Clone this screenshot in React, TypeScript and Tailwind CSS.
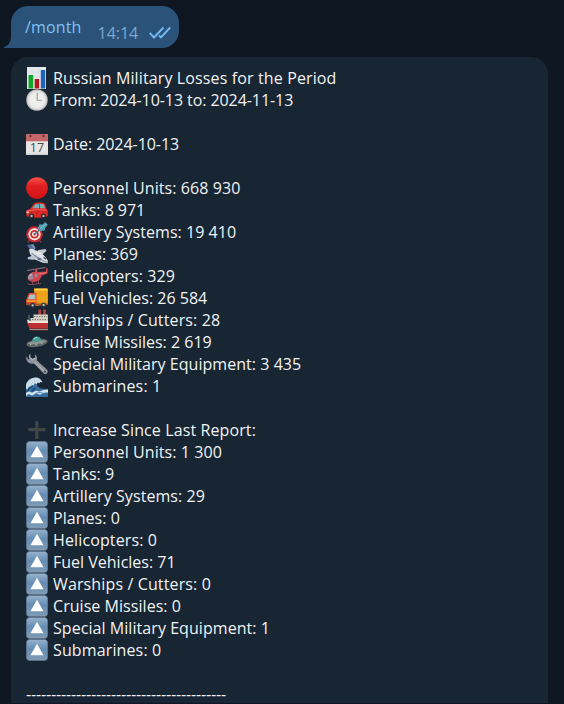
import type { ReactNode } from "react";

function Icon({ children }: { children?: ReactNode }) {
  return (
    <svg className="h-[22px] w-[22px] shrink-0" viewBox="0 0 22 22" fill="none">
      {children}
    </svg>
  );
}

const Chart = () => (
  <Icon>
    <path d="M1 0h19v22H1z" fill="#e4e9ec" />
    <path d="M1 5h19M1 10h19M1 15h19M6 0v22M13 0v22" stroke="#d3dade" strokeWidth=".5" />
    <path d="M2.5 8h4.7v13.5H2.5z" fill="#12a52a" />
    <path d="M8.7 12h4.4v9.5H8.7z" fill="#b8161c" />
    <path d="M14.8 3h4.4v18.5h-4.4z" fill="#1d64b8" />
  </Icon>
);

const Clock = () => (
  <Icon>
    <defs>
      <radialGradient id="face"><stop offset=".6" stopColor="#efefed" /><stop offset=".85" stopColor="#dcdcda" /><stop offset="1" stopColor="#a5a6a8" /></radialGradient>
    </defs>
    <circle cx="11" cy="11" r="10.8" fill="url(#face)" />
    <path d="M11.2 3.8v7.4h4.6" stroke="#98989a" strokeWidth="1.1" />
  </Icon>
);

const Calendar = () => (
  <Icon>
    <path d="M0 1h22v21H0z" fill="#e8e6e5" />
    <path d="M0 1h22v7.3H0z" fill="#c4666a" />
    <path d="M0 20.6h22V22H0z" fill="#d2d0d0" />
    <circle cx="4.5" cy="3" r="1.3" fill="#743b42" />
    <circle cx="17.5" cy="3" r="1.3" fill="#743b42" />
    <text x="11" y="19.4" textAnchor="middle" fontSize="12.500" fontWeight="500" fontFamily="Open Sans, sans-serif" fill="#4a4b50">17</text>
  </Icon>
);

const Red = () => (
  <Icon>
    <defs>
      <linearGradient id="red" x1="0" y1="0" x2="0" y2="1"><stop stopColor="#fa5148" /><stop offset=".4" stopColor="#e02020" /><stop offset="1" stopColor="#d31217" /></linearGradient>
    </defs>
    <circle cx="11" cy="11" r="10.8" fill="url(#red)" />
  </Icon>
);

const Car = () => (
  <Icon>
    <path d="M.4 11.500 4.500 9.500 8.300 4.200q5.500-2 10.300.3l2 5.500 1.200 2v5l-3 1.800L3.500 18.500.5 17z" fill="#dc2928" />
    <path d="m6.300 9.300 3-4 3.700-.6v4.500zM14 4.700l3.600.5 1.500 4-5.100.1z" fill="#74b0b4" />
    <path d="M1 12 8 10.700l12.500.2" stroke="#f7605a" />
    <path d="M11 11.500v5.500M12 12.500h2" stroke="#a91d22" strokeWidth=".7" />
    <circle cx="5.500" cy="17" r="2.600" fill="#27292f" /><circle cx="5.500" cy="17" r="1.200" fill="#aeb6b9" />
    <circle cx="17.500" cy="17" r="2.600" fill="#27292f" /><circle cx="17.500" cy="17" r="1.200" fill="#aeb6b9" />
    <path d="M.5 12.500h2.300v1.700H.5z" fill="#ffe3ac" />
  </Icon>
);

const Target = () => (
  <Icon>
    <path d="m4 18-2 3.500M13 19l2 2.500" stroke="#8c3a38" strokeWidth="1.500" />
    <ellipse cx="8.500" cy="13.300" rx="8.200" ry="8" fill="#cf2930" />
    <circle cx="8.500" cy="13.300" r="6.100" fill="#f2e7e5" />
    <circle cx="8.500" cy="13.300" r="4.300" fill="#cf2930" />
    <circle cx="8.500" cy="13.300" r="2.500" fill="#f4e5e3" />
    <circle cx="8.500" cy="13.300" r="1.100" fill="#ad2930" />
    <path d="m8.500 13.300 8.500-7.600" stroke="#3c7185" strokeWidth="1.300" />
    <path d="m12 6.800 1.500-3.500 3 .2 3-2.700.6 2.200 1.900.5-2.700 3.600-.6 2.400-4.500.5-1.300-1.200z" fill="#4c9fb1" />
    <path d="m14 7.600 7-5" stroke="#90d1da" strokeWidth=".8" />
  </Icon>
);

const Plane = () => (
  <Icon>
    <path d="m1 2 5.500-.8L9 4.500l-.5 3L5 8z" fill="#536a9a" />
    <path d="m5 1.500 2.500-.3L9.500 5l-1 2z" fill="#8190b5" />
    <path d="M11 8.500 12.500 7l7-1 1 1.800-4.500 4z" fill="#c3c9cd" />
    <path d="M3 6.500q3-1.500 5.500.5l6 2 5 5 2.500 4-.4 2.300-4.600-.6-8-3.200-5-5.500z" fill="#dee2e5" />
    <path d="m9.500 11.500-8 3 .5 1.800 5.500.5 7.500-1.300z" fill="#bdc7cf" />
    <path d="m5.500 10 5 4 8 4.500 3 .4" stroke="#8391a4" strokeWidth="1.200" />
    <path d="m17.500 14.200 2.500 2" stroke="#3d4c68" strokeWidth="1.400" />
    <path d="m12 14.800 3.500.6-1 2-3-.4z" fill="#56698a" />
  </Icon>
);

const Helicopter = () => (
  <Icon>
    <path d="M1 5.500 19.500 2.500" stroke="#a3717a" strokeWidth="1" />
    <path d="M10.300 4v4" stroke="#bf5660" strokeWidth="1.800" />
    <path d="M9 6.500 13 7l7-.5V3.500l1.600-.5v5.500l-5.600 2-2.500 4.500q-3 2.500-7.500 1.700-3.800-.8-4.500-3.200Q2 7.300 9 6.500z" fill="#cf434c" />
    <path d="M1.800 13Q2.200 9.200 6.500 8.500l.8 5.500-4 .8zM8.800 8.800l2.600.2v3l-2.600.6z" fill="#9a8f9e" />
    <path d="M3 11.200q1-1.800 3-2" stroke="#d7bec6" strokeWidth="1" />
    <path d="M1.500 18.500Q3 19.700 5 19.500l10-1M6.500 16.500v3M12.500 15.500v3.300" stroke="#8a4a55" strokeWidth="1" />
    <path d="m13 8.800 7-1.200" stroke="#ee777b" />
  </Icon>
);

const Truck = () => (
  <Icon>
    <path d="M8 1.500 20.500 1.200q1.400 0 1.400 1.500v14.800L9 19z" fill="#eda31c" />
    <path d="M8.500 2.600h13" stroke="#ffd14b" strokeWidth="1.800" />
    <path d="M3 6h7.500v13L.3 18v-5.500z" fill="#e3462d" />
    <path d="M3.600 7.500h5.700v4.800H1.800z" fill="#a8c4c8" />
    <path d="M.4 13.200h9.500v1.700H.4z" fill="#f2a02c" />
    <path d="M.4 16.500h21.300v1.600H.4z" fill="#a84c27" />
    <circle cx="6.600" cy="18.300" r="2.600" fill="#33363b" /><circle cx="6.600" cy="18.300" r="1.100" fill="#c3c8ca" />
    <circle cx="17.600" cy="17.900" r="2.500" fill="#33363b" /><circle cx="17.600" cy="17.900" r="1.100" fill="#c3c8ca" />
  </Icon>
);

const Ship = () => (
  <Icon>
    <path d="M12.300.8 15 .3V6h-2.700zM17.200.3l2.700.4V6h-2.700z" fill="#b3403f" />
    <path d="M7.500 5.500H22V13H4.500V9h3z" fill="#d5cdc0" />
    <path d="M8 7.600h13.500M6 10.600h15.500" stroke="#7b7f80" strokeDasharray="1.500 1" />
    <path d="m1 10.500 4 1.800h17v3H2z" fill="#f0e9dd" />
    <path d="M1.500 14H22v5.500H3.200z" fill="#bd3031" />
    <path d="M3 19h19v2.500H4z" fill="#7d3036" />
    <path d="M3.500 20.500H22" stroke="#b9b5b5" strokeWidth=".7" />
    <path d="M3 6v5" stroke="#777f83" />
  </Icon>
);

const Ufo = () => (
  <Icon>
    <ellipse cx="11" cy="12" rx="10.800" ry="3.900" transform="rotate(-9 11 12)" fill="#5d6566" />
    <path d="M.8 12.800q8-5 20.500-3-7 4.800-20.500 3" fill="#8f9694" />
    <path d="M6.200 10.500q-.2-4.400 4.400-5 4-.1 4.600 3.800-3.500 2.500-9 1.200z" fill="#459f98" />
    <path d="M8 8.300q.8-2 3-2" stroke="#a7ded4" />
    <path d="m4 13.400 1.400.3m4 .1h1.700m4-1 1.400-.6" stroke="#c4c4a8" />
  </Icon>
);

const Wrench = () => (
  <Icon>
    <path d="m4 .8.500 3.400L6.800 5.700 9 4.500l.1-3.300q2.800 2.600 1.600 6l10.400 9.600q1.300 1.900-.2 3.600-1.900 1.500-3.500-.1L8 10.400Q4.300 11.300 1.700 9-.5 6.200.6 3.400L3 7" fill="#92959e" />
    <path d="m3.800 1.500-.1 3.200 2.500 2 3.100-1.400M8.500 9l9.700 9.200" stroke="#bfc0c7" strokeWidth=".9" />
    <circle cx="18.900" cy="18.500" r="1" fill="#41464f" />
  </Icon>
);

const Wave = () => (
  <Icon>
    <path d="M0 9.500Q2.500 3 9 2.500q5.500-.3 7.300 4.700-3.500-1.700-5.300.8Q10.500 14.500 22 14v8H0z" fill="#376c9c" />
    <path d="M0 9.500Q2.500 3 9 2.500q5.500-.3 7.300 4.700l-1.800-.2-1.200 1.300-1.600-.9-1 1.800-2-.9-1 2.200-2-.4L4.500 13 3 11.500 1.500 14.200 0 14z" fill="#c7dbe5" />
    <path d="M1.500 17q1.500-5.500 5.500-5.500M6 16.500q.5-2.500 3.500-3" stroke="#194979" strokeWidth="1.500" />
    <path d="m0 18 3-1.800 3 1.500 4-2 3.500.8 4-1.500 4.500-.5v3l-4 .2-4 2-4-1.200-4 2-3-1.500L0 20.700z" fill="#d5e4eb" />
    <path d="m9 18.500 4-1 4 .5" stroke="#5a91bb" />
  </Icon>
);

const Plus = () => (
  <Icon><path d="M9.200 2.200h3.200v6.700H19.500v3.300h-7.100V20H9.200v-7.800H2.200V8.900h7z" fill="#414648" /></Icon>
);

const Up = () => (
  <Icon>
    <defs>
      <linearGradient id="up" x1="0" y1="0" x2="0" y2="1"><stop stopColor="#97b3cd" /><stop offset=".45" stopColor="#668cb3" /><stop offset="1" stopColor="#819cb6" /></linearGradient>
    </defs>
    <rect x=".4" y=".4" width="21.200" height="21.200" rx="3.500" fill="url(#up)" stroke="#647b91" strokeWidth=".7" />
    <path d="M11 4.700 17.500 16.200h-13z" fill="#fff" />
  </Icon>
);

type Line = { icon?: ReactNode; text?: string; tracking?: string };

const lines: Line[] = [
  { icon: <Chart />, text: "Russian Military Losses for the Period", tracking: "tracking-[0.13px]" },
  { icon: <Clock />, text: "From: 2024-10-13 to: 2024-11-13", tracking: "tracking-[-0.07px]" },
  {},
  { icon: <Calendar />, text: "Date: 2024-10-13", tracking: "tracking-[-0.06px]" },
  {},
  { icon: <Red />, text: "Personnel Units: 668 930", tracking: "tracking-[0.08px]" },
  { icon: <Car />, text: "Tanks: 8 971", tracking: "tracking-[-0.04px]" },
  { icon: <Target />, text: "Artillery Systems: 19 410", tracking: "tracking-[0.05px]" },
  { icon: <Plane />, text: "Planes: 369" },
  { icon: <Helicopter />, text: "Helicopters: 329", tracking: "tracking-[0.08px]" },
  { icon: <Truck />, text: "Fuel Vehicles: 26 584" },
  { icon: <Ship />, text: "Warships / Cutters: 28", tracking: "tracking-[0.13px]" },
  { icon: <Ufo />, text: "Cruise Missiles: 2 619" },
  { icon: <Wrench />, text: "Special Military Equipment: 3 435", tracking: "tracking-[0.04px]" },
  { icon: <Wave />, text: "Submarines: 1", tracking: "tracking-[0.13px]" },
  {},
  { icon: <Plus />, text: "Increase Since Last Report:", tracking: "tracking-[0.11px]" },
  { icon: <Up />, text: "Personnel Units: 1 300", tracking: "tracking-[0.08px]" },
  { icon: <Up />, text: "Tanks: 9" },
  { icon: <Up />, text: "Artillery Systems: 29", tracking: "tracking-[0.08px]" },
  { icon: <Up />, text: "Planes: 0", tracking: "tracking-[0.05px]" },
  { icon: <Up />, text: "Helicopters: 0", tracking: "tracking-[0.13px]" },
  { icon: <Up />, text: "Fuel Vehicles: 71" },
  { icon: <Up />, text: "Warships / Cutters: 0", tracking: "tracking-[0.13px]" },
  { icon: <Up />, text: "Cruise Missiles: 0", tracking: "tracking-[0.05px]" },
  { icon: <Up />, text: "Special Military Equipment: 1", tracking: "tracking-[0.06px]" },
  { icon: <Up />, text: "Submarines: 0", tracking: "tracking-[0.13px]" },
  {},
  { text: "----------------------------------------", tracking: "tracking-[-0.15px]" },
];

export default function App() {
  return (
    <main className="flex h-[704px] w-[564px] flex-col overflow-hidden bg-[#0e1621] pt-[6px] font-['Open_Sans',sans-serif] text-[16px] leading-[22px] text-[#f1f3f4]">
      <div className="flex h-[42px] shrink-0 items-end pl-1">
        <svg className="h-[10px] w-[7px]" viewBox="0 0 7 10"><path d="M7 0Q6 7 0 9v1h7z" fill="#2b5278" /></svg>
        <div className="flex h-[42px] w-[168px] rounded-t-[17px] rounded-br-[17px] bg-[#2b5278] pl-[14px] pt-[10px]">
          <span className="tracking-[0.15px] text-[#7fc3f5]">/month</span>
          <span className="ml-4 mt-[6px] tracking-[-0.05px] text-[#7da8d3]">14:14</span>
          <svg className="ml-[11px] mt-[10px] h-[13px] w-[22px]" viewBox="0 0 22 13" fill="none" stroke="#73b9f5" strokeWidth="1.900">
            <path d="m.7 6.800 4.300 4.700L14.500 1.500M10 9.500l2 2L21.200 1.500" />
          </svg>
        </div>
      </div>
      <section className="ml-[11px] mt-[9px] h-[646px] w-[537px] shrink-0 rounded-t-[17px] bg-[#182533] pl-[15px] pt-[10px]">
        {lines.map((line, i) => (
          <div key={i} className="flex h-[22px] items-center whitespace-pre">
            {line.icon && <span className="mr-[5px] flex">{line.icon}</span>}
            <span className={line.tracking}>{line.text}</span>
          </div>
        ))}
      </section>
    </main>
  );
}
